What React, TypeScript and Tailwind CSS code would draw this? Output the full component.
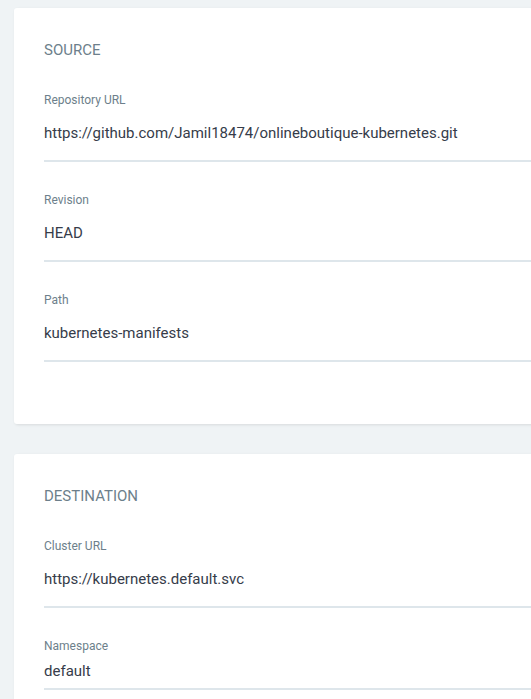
const SOURCE_FIELDS = [
  { label: "Repository URL", value: "https://github.com/Jamil18474/onlineboutique-kubernetes.git" },
  { label: "Revision", value: "HEAD" },
  { label: "Path", value: "kubernetes-manifests" },
];

function Field({ label, value, tight = false }: { label: string; value: string; tight?: boolean }) {
  return (
    <div className="flex flex-col">
      <label className="text-[12px] leading-[16px] text-[#6d7f8b]">{label}</label>
      <div
        className={
          "border-b-2 border-[#dee6eb] text-[15px] leading-[20px] text-[#363c4a] " +
          (tight ? "pt-[7px] pb-[7px]" : "pt-[15px] pb-[17px]")
        }
      >
        {value}
      </div>
    </div>
  );
}

export default function App() {
  return (
    <div
      className="w-[531px] h-[699px] overflow-hidden bg-[#eff3f5] pt-[8px] pl-[14px]"
      style={{ fontFamily: "Roboto, 'Liberation Sans', sans-serif" }}
    >
      <div className="flex flex-col gap-[30px] w-[620px]">
        {/* Source */}
        <div className="bg-white rounded-[3px] shadow-[1px_1px_3px_rgba(0,0,0,0.1)] pl-[30px] pt-[32px] pb-[62px]">
          <h2 className="text-[15px] leading-[20px] uppercase text-[#6d7f8b] mb-[32px]">Source</h2>
          <div className="flex flex-col gap-[30px]">
            {SOURCE_FIELDS.map(({ label, value }) => (
              <Field key={label} label={label} value={value} />
            ))}
          </div>
        </div>

        {/* Destination */}
        <div className="bg-white rounded-[3px] shadow-[1px_1px_3px_rgba(0,0,0,0.1)] pl-[30px] pt-[32px] pb-[40px]">
          <h2 className="text-[15px] leading-[20px] uppercase text-[#6d7f8b] mb-[32px]">Destination</h2>
          <div className="flex flex-col gap-[30px]">
            <Field label="Cluster URL" value="https://kubernetes.default.svc" />
            <Field label="Namespace" value="default" tight />
          </div>
        </div>
      </div>
    </div>
  );
}
